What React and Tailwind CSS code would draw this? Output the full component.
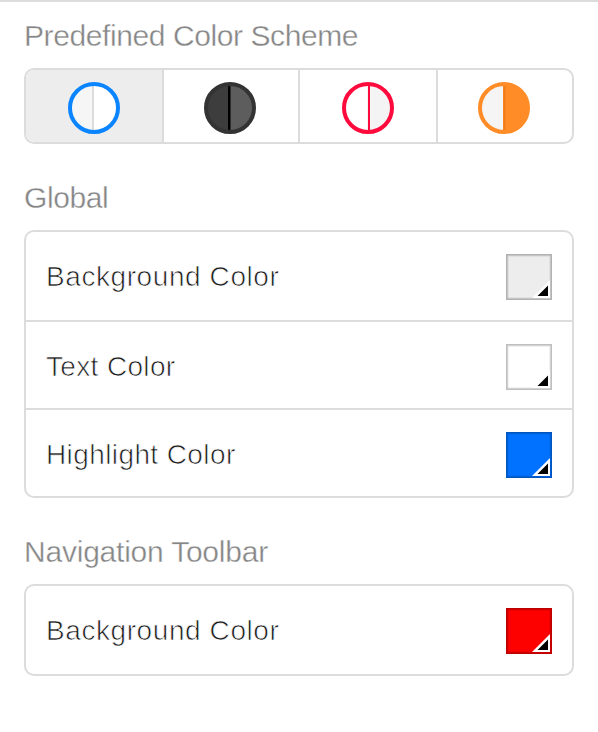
const HELVETICA = "font-['Liberation_Sans',Arial,sans-serif]";

function Heading({ children, className }) {
  return (
    <h2 className={`flex h-9 items-center pl-6 text-[30px] leading-9 whitespace-nowrap text-[#868686] [-webkit-text-stroke:0.35px_white] ${className}`}>
      <span>{children}</span>
    </h2>
  );
}

function Swatch({ fill, edge, inner }) {
  return (
    <svg className="block h-[46px] w-[46px] shrink-0" viewBox="0 0 46 46">
      <rect width="46" height="46" fill={edge} />
      <rect x="1.5" y="1.5" width="43" height="43" fill={inner} />
      <rect x="2.5" y="2.5" width="41" height="41" fill={fill} />
      <path d="M44 26V44H26Z" fill="#fff" />
      <path d="M42 31.5V42H31.5Z" fill="#000" />
    </svg>
  );
}

function Row({ label, height, last, swatch, spacing }) {
  return (
    <div className={`flex items-start justify-between pt-[22px] pr-5 pl-5 ${height} ${last ? "" : "border-b-2 border-[#dcdcdc]"}`}>
      <span className={`text-[28px] leading-[46px] whitespace-nowrap text-[#1c1c1c] [-webkit-text-stroke:0.7px_white] ${spacing}`}>{label}</span>
      <Swatch {...swatch} />
    </div>
  );
}

function Disc({ ring, left, right, line, lineX = 24, lineWidth = 2 }) {
  return (
    <svg className="block h-[52px] w-[52px]" viewBox="0 0 52 52">
      <circle cx="26" cy="26" r="24" fill={right} />
      <path d="M25 2.1A24 24 0 0 0 25 49.9Z" fill={left} />
      <rect x={lineX} y="4" width={lineWidth} height="44" fill={line} />
      <circle cx="26" cy="26" r="24" fill="none" stroke={ring} strokeWidth="4" />
    </svg>
  );
}

export default function App() {
  return (
    <main className={`h-[732px] w-[598px] overflow-hidden border-t-2 border-[#dcdcdc] bg-white ${HELVETICA}`}>
      <Heading className="mt-4 tracking-[-0.41px]">Predefined Color Scheme</Heading>
      <div className="mx-6 mt-[14px] flex h-[76px] overflow-hidden rounded-[10px] border-2 border-[#dcdcdc]">
        <div className="flex w-[138px] items-start border-r-2 border-[#dcdcdc] bg-[#ededed] pt-3 pl-[42px]">
          <Disc ring="#0a84ff" left="#f6f6f6" right="#fff" line="#dcdcdc" />
        </div>
        <div className="flex w-[136px] items-start border-r-2 border-[#dcdcdc] pt-3 pl-10">
          <Disc ring="#333" left="#3d3d3d" right="#5d5d5d" line="#000" lineWidth={2.5} />
        </div>
        <div className="flex w-[138px] items-start border-r-2 border-[#dcdcdc] pt-3 pl-[42px]">
          <Disc ring="#ff0a3c" left="#fff" right="#f4f4f4" line="#ff0a3c" lineX={26} />
        </div>
        <div className="flex flex-1 items-start pt-3 pl-10">
          <Disc ring="#ff8c26" left="#f5f5f5" right="#ff8c26" line="#f07d1c" lineX={25.5} />
        </div>
      </div>

      <Heading className="mt-9 tracking-[-0.4px]">Global</Heading>
      <div className="mx-6 mt-[14px] rounded-[10px] border-2 border-[#dcdcdc]">
        <Row label="Background Color" height="h-[90px]" spacing="tracking-[0.58px]" swatch={{ fill: "#ededed", edge: "#b2b2b2", inner: "#d5d5d5" }} />
        <Row label="Text Color" height="h-[88px]" spacing="tracking-[0.35px]" swatch={{ fill: "#fff", edge: "#bfbfbf", inner: "#e4e4e4" }} />
        <Row label="Highlight Color" height="h-[86px]" last spacing="tracking-[0.4px]" swatch={{ fill: "#0072ff", edge: "#0056c0", inner: "#0068e8" }} />
      </div>

      <Heading className="mt-9 tracking-[-0.22px]">Navigation Toolbar</Heading>
      <div className="mx-6 mt-[14px] rounded-[10px] border-2 border-[#dcdcdc]">
        <Row label="Background Color" height="h-[88px]" last spacing="tracking-[0.58px]" swatch={{ fill: "#fd0000", edge: "#bd0000", inner: "#e40000" }} />
      </div>
    </main>
  );
}
